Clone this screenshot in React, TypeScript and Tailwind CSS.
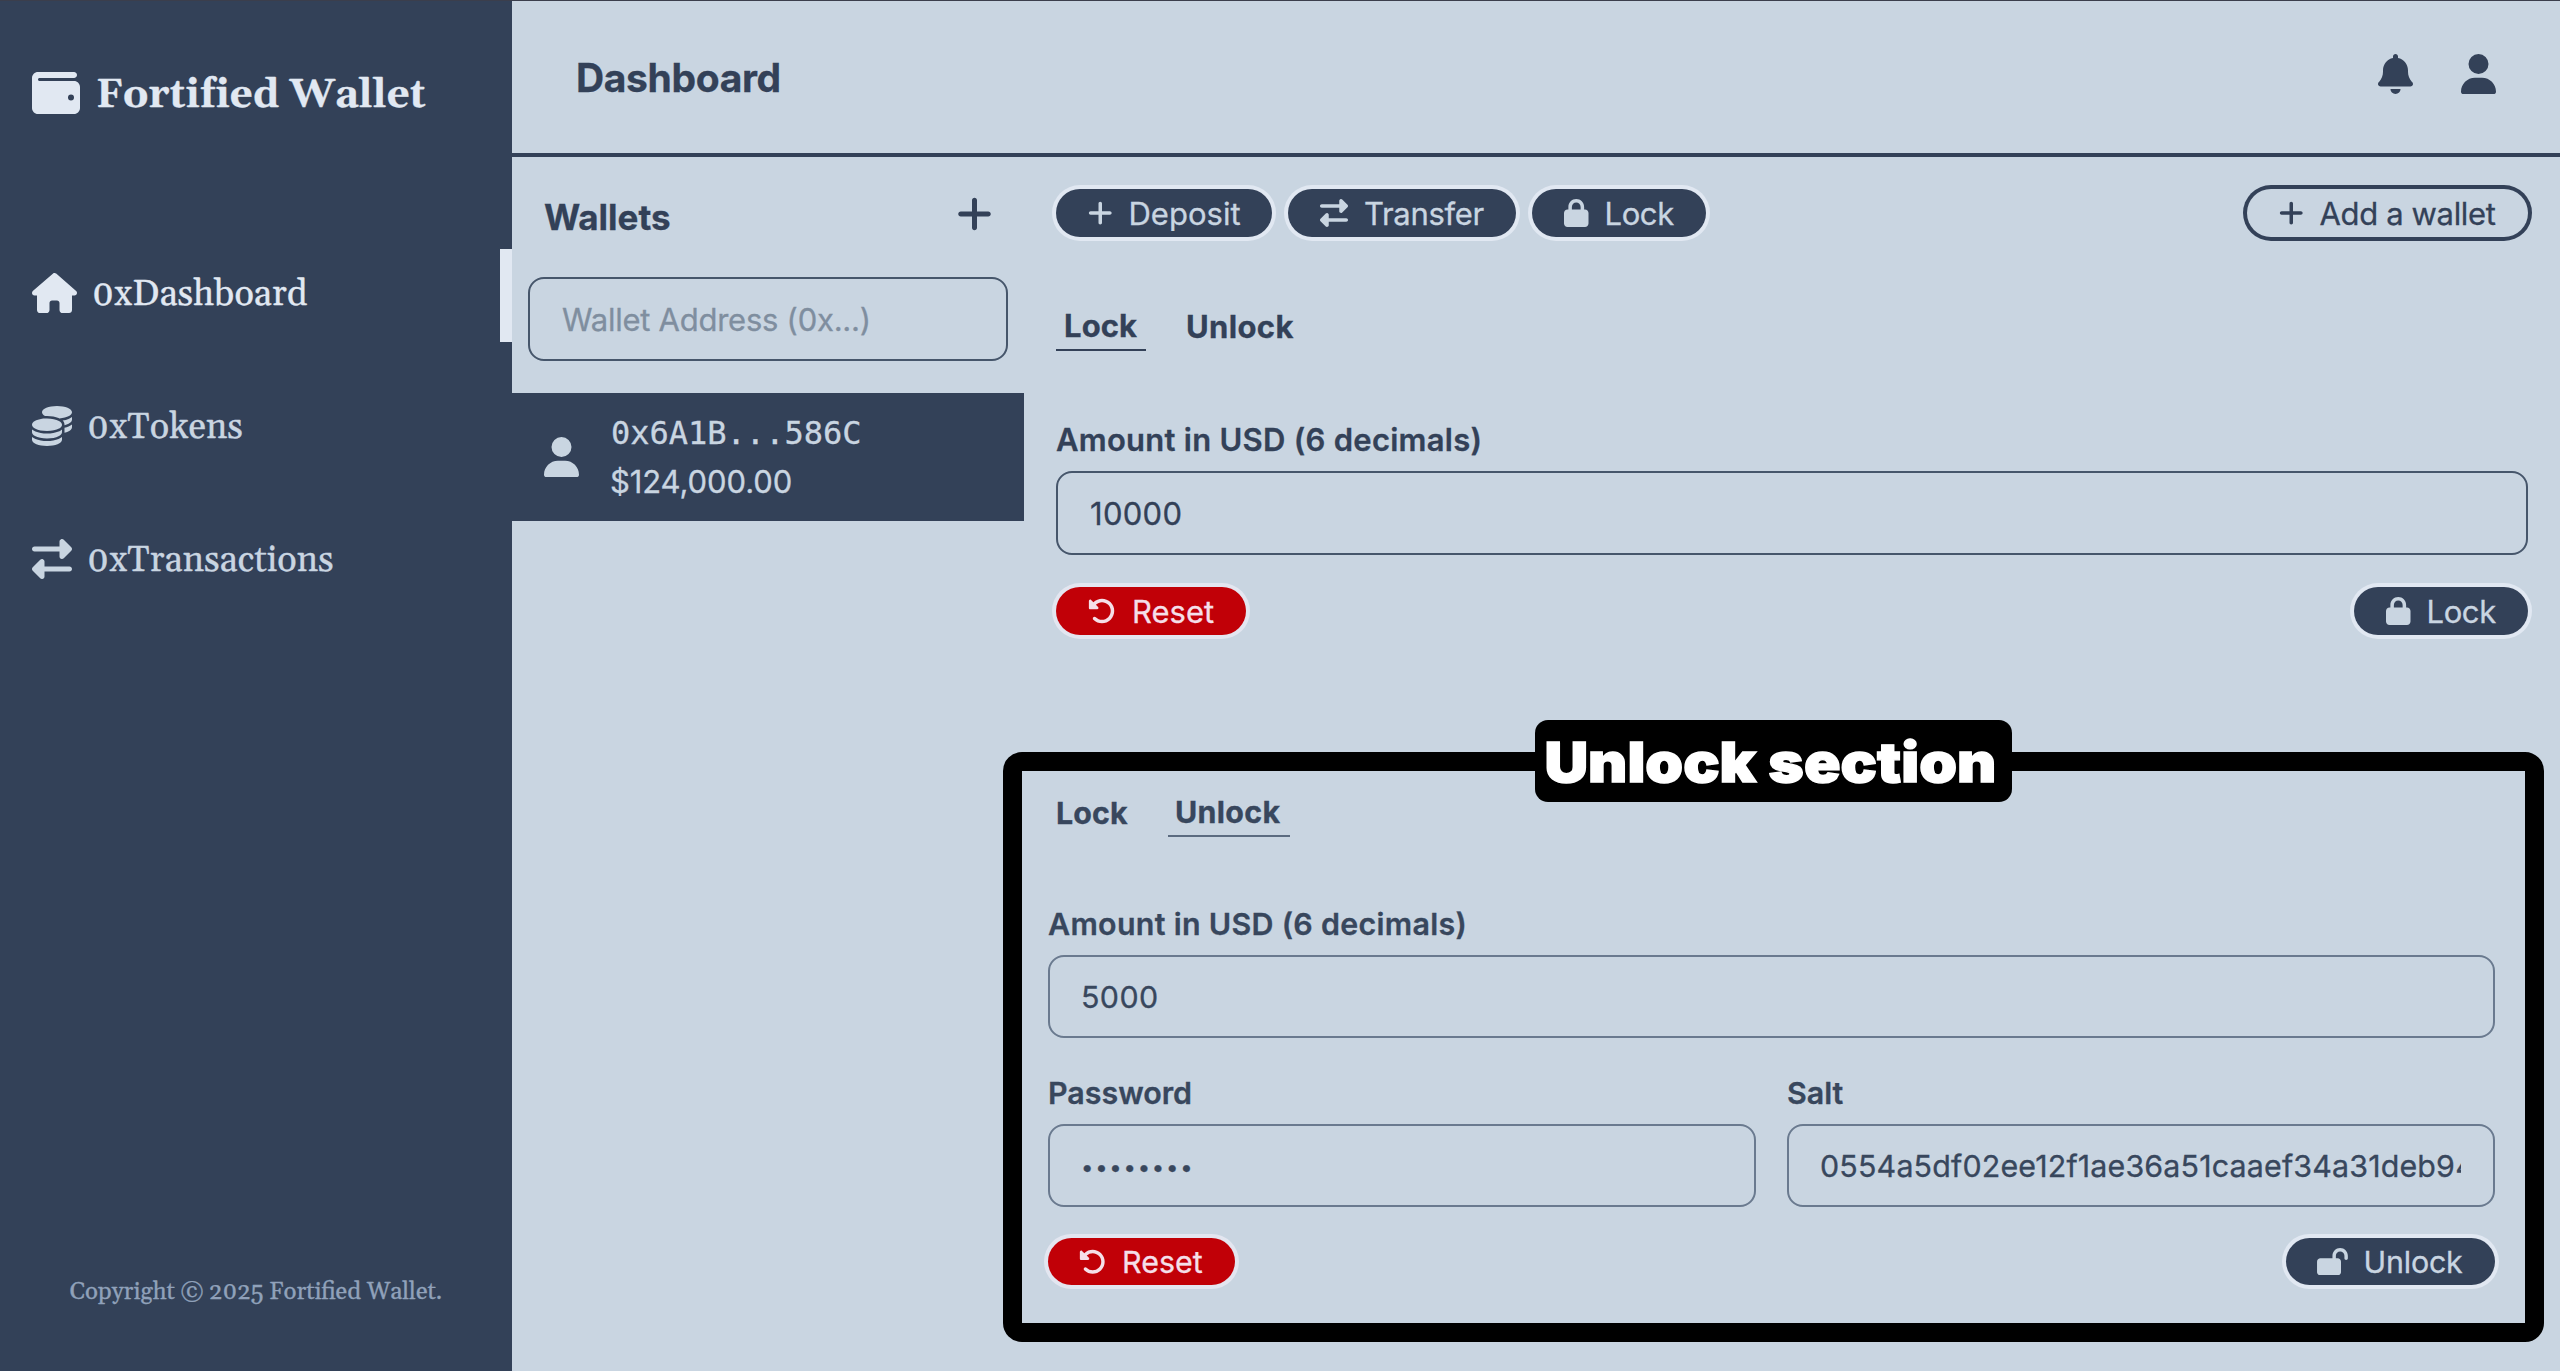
import type { ReactNode } from 'react'
import {
  FaBell,
  FaCoins,
  FaHouse,
  FaLock,
  FaLockOpen,
  FaPlus,
  FaRightLeft,
  FaRotateLeft,
  FaUser,
  FaWallet,
} from 'react-icons/fa6'

type PillProps = {
  icon: ReactNode
  label: string
  className: string
  textClass?: string
}

function Pill({ icon, label, className, textClass = '' }: PillProps) {
  return (
    <button className={`flex shrink-0 items-center rounded-full whitespace-nowrap ring-4 ${className}`}>
      {icon}
      <span className={`pt-0.5 ${textClass}`}>{label}</span>
    </button>
  )
}

function Sidebar() {
  return (
    <aside className="flex w-[512px] shrink-0 flex-col bg-[#334158] pt-[68px] font-[Gelasio,'DejaVu_Serif_Condensed',serif] text-[#c9d5e1] oldstyle-nums">
      <div className="flex h-12 items-center gap-4 pl-8 text-[#e1e8f2]">
        <FaWallet className="h-12 w-12" />
        <span className="pt-[5px] text-[40px] leading-[48px] font-bold tracking-[0.12px] whitespace-nowrap">
          Fortified Wallet
        </span>
      </div>
      <nav className="mt-[132px] flex flex-col gap-10 text-[36px] leading-[48px]">
        <a className="flex h-[93px] items-center gap-[15px] border-r-12 border-[#e1e8f2] pb-[5px] pl-8 text-[#e1e8f2]">
          <FaHouse className="h-10 w-[45px]" />
          <span className="pt-[3px] tracking-[0.05px]">0xDashboard</span>
        </a>
        <a className="flex h-[93px] items-center gap-[15px] pb-[5px] pl-8">
          <FaCoins className="h-10 w-10" />
          <span className="pt-[3px] tracking-[0.05px]">0xTokens</span>
        </a>
        <a className="flex h-[93px] items-center gap-[15px] pb-[5px] pl-8">
          <FaRightLeft className="h-10 w-10" />
          <span className="pt-[3px] tracking-[0.05px]">0xTransactions</span>
        </a>
      </nav>
      <p className="mt-auto pb-[61px] text-center text-[24px] leading-9 text-[#90a1ba]">
        Copyright © 2025 Fortified Wallet.
      </p>
    </aside>
  )
}

function Header() {
  return (
    <header className="flex h-[156px] shrink-0 items-center justify-between border-b-4 border-[#334158] px-16">
      <h1 className="pt-0.5 text-[39px] leading-[48px] font-bold tracking-[-0.35px]">Dashboard</h1>
      <div className="mb-[6px] flex gap-12">
        <FaBell className="h-10 w-[35px]" />
        <FaUser className="h-10 w-[35px]" />
      </div>
    </header>
  )
}

function WalletList() {
  return (
    <section className="w-[512px] shrink-0">
      <div className="flex h-[120px] items-center justify-between px-8">
        <h2 className="text-[35px] leading-[48px] font-bold">Wallets</h2>
        <FaPlus className="mb-[6px] h-10 w-[35px]" />
      </div>
      <div className="mx-4 flex h-[84px] items-center rounded-2xl border-2 border-[#46566b] px-8 pt-0.5 text-[31px] tracking-[-0.25px] text-[#7f8e9f]">
        Wallet Address (0x...)
      </div>
      <div className="mt-8 flex h-32 items-center gap-[31px] bg-[#334158] pl-8 text-[#c9d5e1]">
        <FaUser className="h-10 w-[35px]" />
        <div className="flex flex-col leading-[48px]">
          <span className="pl-px font-['DejaVu_Sans_Mono',monospace] text-[32px]">0x6A1B...586C</span>
          <span className="-mb-px pt-px text-[31px] tracking-[-0.1px]">$124,000.00</span>
        </div>
      </div>
    </section>
  )
}

function LockPanel() {
  return (
    <section className="flex flex-1 flex-col px-8 pt-8 text-[31px]">
      <div className="flex items-center justify-between">
        <div className="flex gap-4">
          <Pill
            icon={<FaPlus className="h-7 w-[24.5px]" />}
            label="Deposit"
            className="h-12 w-[216px] gap-4 bg-[#334158] pl-8 text-[#c9d5e1] ring-[#e1e8f2]"
          />
          <Pill
            icon={<FaRightLeft className="h-7 w-7" />}
            label="Transfer"
            className="h-12 w-[228px] gap-4 bg-[#334158] pl-8 text-[#c9d5e1] ring-[#e1e8f2]"
            textClass="tracking-[-0.3px]"
          />
          <Pill
            icon={<FaLock className="h-7 w-[24.5px]" />}
            label="Lock"
            className="h-12 w-[174px] gap-4 bg-[#334158] pl-8 text-[#c9d5e1] ring-[#e1e8f2]"
            textClass="tracking-[-0.4px]"
          />
        </div>
        <Pill
          icon={<FaPlus className="h-7 w-[24.5px]" />}
          label="Add a wallet"
          className="h-12 w-[281px] gap-4 pl-8 ring-[#334158]"
          textClass="tracking-[-0.35px]"
        />
      </div>

      <div className="mt-[65px] flex h-[49px] gap-8 font-bold">
        <div className="flex w-[90px] items-center border-b-2 border-[#334158] pt-0.5 pl-2 tracking-[0.1px]">Lock</div>
        <div className="flex items-center px-2 pt-0.5 tracking-[0.35px]">Unlock</div>
      </div>

      <label className="mt-[65px] mb-[7px] h-12 leading-[48px] font-semibold tracking-[0.26px]">
        Amount in USD (6 decimals)
      </label>
      <div className="flex h-[84px] items-center rounded-2xl border-2 border-[#46566b] px-8 pt-0.5 tracking-[0.3px]">
        10000
      </div>

      <div className="mt-8 flex justify-between">
        <Pill
          icon={<FaRotateLeft className="h-7 w-7" />}
          label="Reset"
          className="h-12 w-[190px] gap-4 bg-[#c10007] pl-8 text-[#f5dfe8] ring-[#e3e6f0]"
        />
        <Pill
          icon={<FaLock className="h-7 w-[24.5px]" />}
          label="Lock"
          className="h-12 w-[174px] gap-4 bg-[#334158] pl-8 text-[#c9d5e1] ring-[#e1e8f2]"
          textClass="tracking-[-0.4px]"
        />
      </div>
    </section>
  )
}

function UnlockCallout() {
  return (
    <div className="absolute top-[751px] left-[1003px] flex h-[590px] w-[1541px] flex-col rounded-[19px] border-[19px] border-black bg-[#c9d5e1] pt-[18px] pr-[30px] pl-[26px] text-[30.4px] text-[#38475d]">
      <div className="absolute -top-[51px] left-[513px] flex h-[82px] w-[477px] items-center justify-center rounded-[13px] bg-black pt-[3px] pr-1.5">
        <span className="scale-x-110 text-[55px] font-black whitespace-nowrap text-white [-webkit-text-stroke:1.4px_white]">
          Unlock section
        </span>
      </div>

      <div className="flex h-12 gap-8 font-bold">
        <div className="flex w-[88px] items-center pt-0.5 pl-2 tracking-[0.1px]">Lock</div>
        <div className="flex w-[122px] items-center border-b-2 border-[#5b6b80] pt-0.5 pl-[7px] tracking-[0.3px]">
          Unlock
        </div>
      </div>

      <label className="mt-16 mb-[7px] h-[47px] leading-[47px] font-semibold tracking-[0.3px]">
        Amount in USD (6 decimals)
      </label>
      <div className="flex h-[83px] items-center rounded-2xl border-2 border-[#6a7a8f] px-[31px] pt-0.5 tracking-[0.4px]">
        5000
      </div>

      <div className="mt-8 flex gap-[31px]">
        <div className="flex min-w-0 flex-1 flex-col">
          <label className="mb-[7px] h-[47px] leading-[47px] font-semibold">Password</label>
          <div className="flex h-[83px] items-center rounded-2xl border-2 border-[#6a7a8f] px-[31px] pt-[3px] text-[22px] tracking-[1.8px]">
            ••••••••
          </div>
        </div>
        <div className="flex min-w-0 flex-1 flex-col">
          <label className="mb-[7px] h-[47px] leading-[47px] font-semibold">Salt</label>
          <div className="flex h-[83px] items-center rounded-2xl border-2 border-[#6a7a8f] pt-0.5 pr-8 pl-[31px]">
            <span className="overflow-hidden tracking-[0.16px] whitespace-nowrap">
              0554a5df02ee12f1ae36a51caaef34a31deb94
            </span>
          </div>
        </div>
      </div>

      <div className="mt-[31px] flex justify-between">
        <Pill
          icon={<FaRotateLeft className="h-[27.4px] w-[27.4px]" />}
          label="Reset"
          className="h-[47px] w-[187px] gap-[15.7px] bg-[#c10007] pl-[31px] text-[#f5dfe8] ring-[#e3e6f0]"
        />
        <Pill
          icon={<FaLockOpen className="h-[27.4px] w-[30.9px]" />}
          label="Unlock"
          className="h-[47px] w-[209px] gap-[15.7px] bg-[#334158] pl-[31px] text-[#c9d5e1] ring-[#e1e8f2]"
          textClass="tracking-[-0.2px]"
        />
      </div>
    </div>
  )
}

export default function App() {
  return (
    <div className="relative flex h-[1371px] w-[2560px] overflow-hidden border-t border-[#3b3e4c] bg-[#c9d5e1] font-[Inter,sans-serif] text-[#334158] [-webkit-text-stroke:0.3px]">
      <Sidebar />
      <main className="flex flex-1 flex-col">
        <Header />
        <div className="flex flex-1">
          <WalletList />
          <LockPanel />
        </div>
      </main>
      <UnlockCallout />
    </div>
  )
}
